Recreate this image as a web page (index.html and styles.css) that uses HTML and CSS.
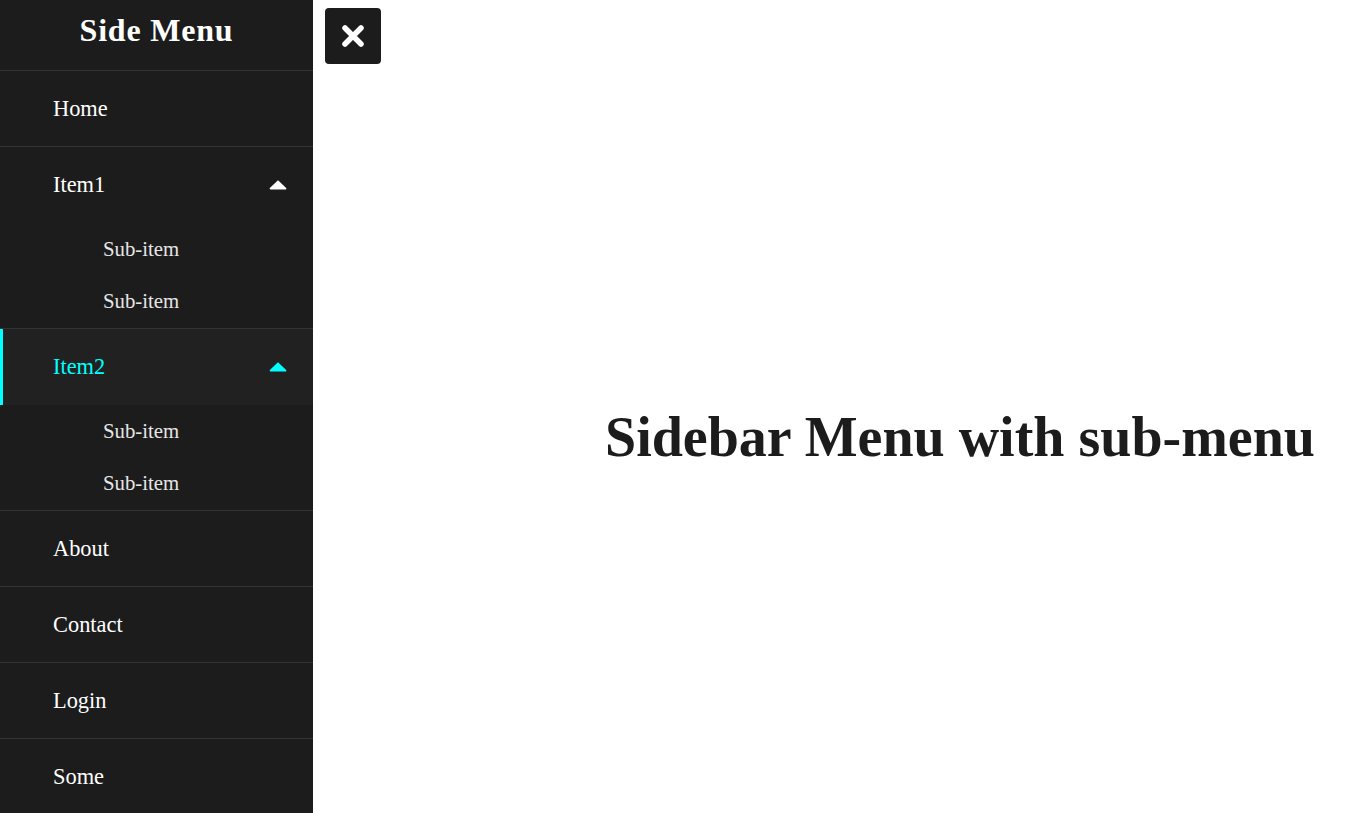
FILE: index.html
```html
<!DOCTYPE html>
<html>
<head>
<meta charset="utf-8">
<link rel="stylesheet" href="styles.css">
</head>
<body>
<nav class="sidebar">
  <div class="brand">Side Menu</div>
  <ul class="menu">
    <li class="item"><a class="row">Home</a></li>
    <li class="item has-sub">
      <a class="row">Item1<svg class="caret" viewBox="0 0 18 10"><path d="M9 1.2 L16.6 8.6 L1.4 8.6 Z" fill="currentColor" stroke="currentColor" stroke-width="1.6" stroke-linejoin="round"/></svg></a>
      <ul class="sub">
        <li><a class="sub-row">Sub-item</a></li>
        <li><a class="sub-row">Sub-item</a></li>
      </ul>
    </li>
    <li class="item has-sub active">
      <a class="row">Item2<svg class="caret" viewBox="0 0 18 10"><path d="M9 1.2 L16.6 8.6 L1.4 8.6 Z" fill="currentColor" stroke="currentColor" stroke-width="1.6" stroke-linejoin="round"/></svg></a>
      <ul class="sub">
        <li><a class="sub-row">Sub-item</a></li>
        <li><a class="sub-row">Sub-item</a></li>
      </ul>
    </li>
    <li class="item"><a class="row">About</a></li>
    <li class="item"><a class="row">Contact</a></li>
    <li class="item"><a class="row">Login</a></li>
    <li class="item"><a class="row">Some</a></li>
  </ul>
</nav>
<main class="main">
  <button class="close" aria-label="close">
    <svg viewBox="0 0 24 24" width="24" height="24"><path d="M4 4 L20 20 M20 4 L4 20" stroke="#fff" stroke-width="5.5" stroke-linecap="round"/></svg>
  </button>
  <div class="content">
    <h1 class="title">Sidebar Menu with sub-menu</h1>
  </div>
</main>
</body>
</html>
```

FILE: styles.css
```css
html, body {
  margin: 0;
  padding: 0;
  height: 100%;
}
body {
  display: flex;
  font-family: "Liberation Serif", "Times New Roman", serif;
  background: #fff;
  overflow: hidden;
}
.sidebar {
  width: 313px;
  flex: 0 0 313px;
  height: 100vh;
  background: #1c1c1c;
  overflow: hidden;
}
.brand {
  height: 70px;
  border-bottom: 1px solid #333;
  color: #fff;
  font-weight: bold;
  font-size: 32px;
  letter-spacing: 0.8px;
  text-align: center;
  line-height: 60px;
}
.menu, .sub {
  list-style: none;
  margin: 0;
  padding: 0;
}
.item {
  border-bottom: 1px solid #333;
}
.row {
  display: flex;
  align-items: center;
  justify-content: space-between;
  height: 75px;
  padding: 0 26px 0 53px;
  color: #fff;
  font-size: 22.4px;
  box-sizing: border-box;
}
.has-sub .row {
  height: 76px;
}
.active .row {
  background: #212121;
  color: #0ff;
  border-left: 3px solid #0ff;
  padding-left: 50px;
}
.caret {
  width: 18px;
  height: 10px;
  color: #fff;
}
.active .caret {
  color: #0ff;
}
.sub {
  padding-bottom: 1px;
}
.sub-row {
  display: flex;
  align-items: center;
  height: 52px;
  padding-left: 103px;
  color: #e6e6e6;
  font-size: 20.8px;
}
.main {
  flex: 1;
  display: flex;
  flex-direction: column;
  height: 100vh;
}
.close {
  margin: 8px 0 0 12px;
  width: 56px;
  height: 56px;
  background: #1c1c1c;
  border: none;
  border-radius: 4px;
  display: flex;
  align-items: center;
  justify-content: center;
  padding: 0;
  flex: 0 0 auto;
}
.content {
  flex: 1;
  display: flex;
  align-items: center;
  justify-content: center;
  padding-left: 246px;
  padding-bottom: 4px;
}
.title {
  margin: 0;
  font-size: 56px;
  font-weight: bold;
  color: #1c1c1c;
}
```
